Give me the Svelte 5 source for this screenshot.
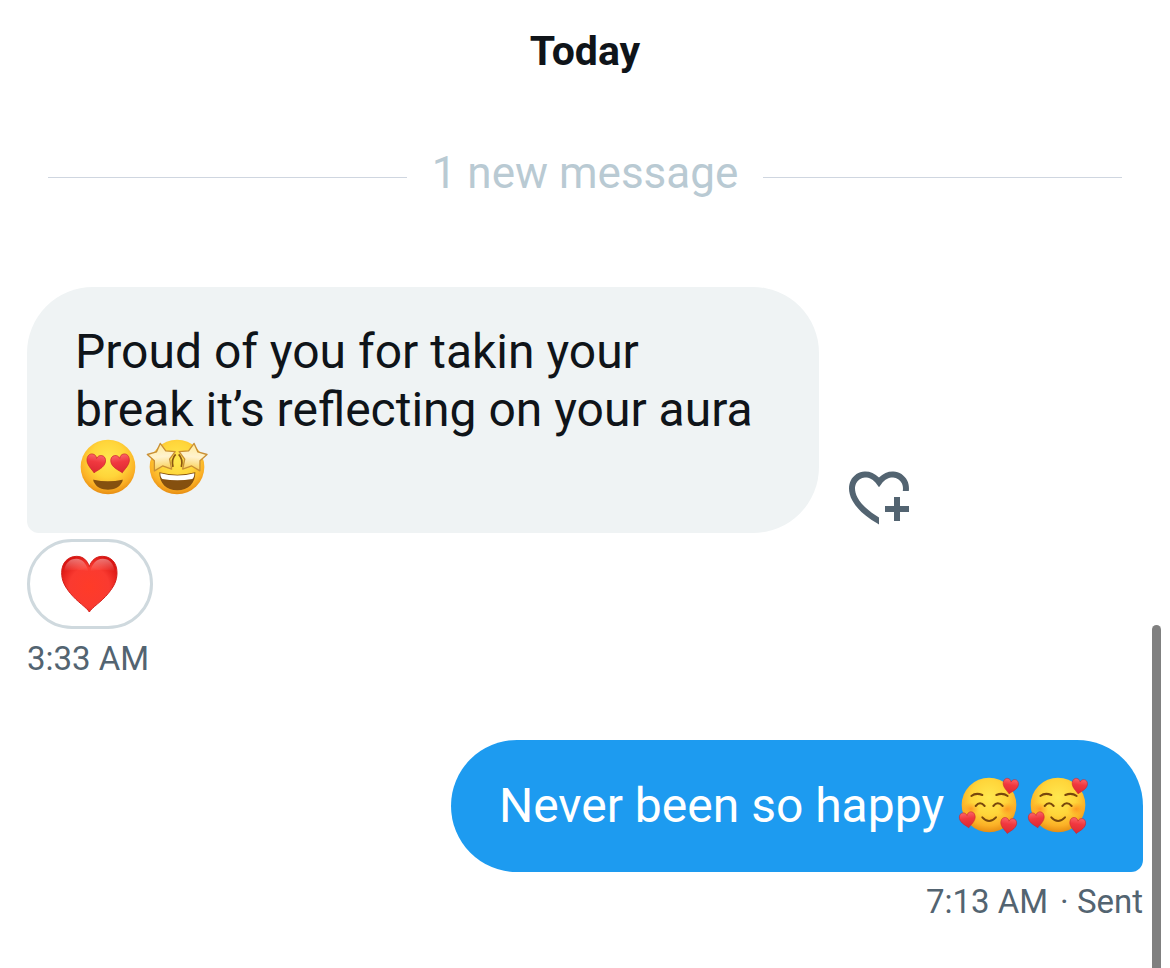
<script lang="ts">
	type EmojiName = 'heart-eyes' | 'star-struck' | 'smiling-hearts';

	type Message = {
		id: number;
		sent: boolean;
		lines: string[];
		emojis: EmojiName[];
		time: string;
		status?: string;
		liked: boolean;
	};

	const labels: Record<EmojiName, string> = {
		'heart-eyes': 'Smiling face with heart eyes',
		'star-struck': 'Star-struck',
		'smiling-hearts': 'Smiling face with hearts'
	};

	let messages: Message[] = $state([
		{
			id: 1,
			sent: false,
			lines: ['Proud of you for takin your', 'break it’s reflecting on your aura', ''],
			emojis: ['heart-eyes', 'star-struck'],
			time: '3:33 AM',
			liked: true
		},
		{
			id: 2,
			sent: true,
			lines: ['Never been so happy '],
			emojis: ['smiling-hearts', 'smiling-hearts'],
			time: '7:13 AM',
			status: 'Sent',
			liked: false
		}
	]);

	function toggleLike(message: Message) {
		message.liked = !message.liked;
	}
</script>

{#snippet smallHeart(x: number, y: number, scale: number, angle: number)}
	<path
		transform="translate({x} {y}) rotate({angle}) scale({scale})"
		d="M0 28C-6 20-28 8-28-10C-28-22-21-27-14-27C-7-27-2-23 0-16C2-23 7-27 14-27C21-27 28-22 28-10C28 8 6 20 0 28Z"
		fill="url(#heart)"
		stroke="#c9232b"
		stroke-width="2"
	/>
{/snippet}

{#snippet star(x: number, angle: number)}
	<path
		transform="translate({x} 66) rotate({angle})"
		d="M0-41L14-17L42-12L23 9L26 39L0 27L-26 39L-23 9L-42-12L-14-17Z"
		fill="url(#star)"
		stroke="#c98f35"
		stroke-width="4"
		stroke-linejoin="round"
	/>
{/snippet}

{#snippet emoji(name: EmojiName)}
	<svg class="emoji" viewBox="0 0 192 192" role="img" aria-label={labels[name]}>
		<circle cx="96" cy="96" r="82" fill="url(#face)" />
		{#if name === 'heart-eyes'}
			{@render smallHeart(59, 86, 1, 10)}
			{@render smallHeart(134, 86, 1, -10)}
			<path d="M53 134Q96 144 139 134C141 132 140 138 138 142C130 158 114 164 96 164C78 164 62 158 54 142C52 138 51 132 53 134Z" fill="#85500f" />
		{:else if name === 'star-struck'}
			<path d="M43 112Q97 126 151 112C151 145 130 166 97 166C64 166 43 145 43 112Z" fill="#85500f" />
			<path d="M46 115Q97 128 148 115Q148 128 142 132Q97 140 52 132Q46 128 46 115Z" fill="#fff" />
			<path d="M92 58Q78 72 84 96M101 58Q115 72 109 96" fill="none" stroke="#8a5512" stroke-width="5" />
			{@render star(50, -6)}
			{@render star(143, 6)}
		{:else}
			<ellipse cx="151" cy="108" rx="28" ry="20" fill="url(#blush)" />
			<ellipse cx="42" cy="108" rx="25" ry="20" fill="url(#blush)" />
			<g fill="none" stroke="#78470c" stroke-width="6" stroke-linecap="round">
				<path d="M43 69Q57 58 76 66M118 66Q137 58 152 69" />
				<path d="M56 99Q69 83 83 99M109 99Q122 83 137 99" />
				<path d="M76 133Q96 155 117 133" />
			</g>
			{@render smallHeart(160, 40, 0.82, 10)}
			{@render smallHeart(32, 141, 0.85, -8)}
			{@render smallHeart(154, 158, 0.85, 8)}
		{/if}
	</svg>
{/snippet}

<svg class="defs" width="0" height="0" aria-hidden="true">
	<defs>
		<radialGradient id="face" cx="0.5" cy="0.36" r="0.65">
			<stop offset="0" stop-color="#ffe84f" />
			<stop offset="0.5" stop-color="#ffd53a" />
			<stop offset="0.8" stop-color="#fbb026" />
			<stop offset="1" stop-color="#e58a10" />
		</radialGradient>
		<linearGradient id="heart" x1="0" y1="0" x2="0" y2="1">
			<stop offset="0" stop-color="#fb6468" />
			<stop offset="0.4" stop-color="#f0383f" />
			<stop offset="1" stop-color="#dc2832" />
		</linearGradient>
		<linearGradient id="star" x1="0" y1="0" x2="0" y2="1">
			<stop offset="0" stop-color="#ffeb9a" />
			<stop offset="0.5" stop-color="#fff3cf" />
			<stop offset="1" stop-color="#f9cf50" />
		</linearGradient>
		<radialGradient id="blush">
			<stop offset="0" stop-color="#ff8b1e" stop-opacity="0.75" />
			<stop offset="1" stop-color="#ff9d20" stop-opacity="0" />
		</radialGradient>
		<radialGradient id="reaction" cx="0.5" cy="0.55" r="0.6">
			<stop offset="0" stop-color="#ff3b28" />
			<stop offset="0.6" stop-color="#fa3a30" />
			<stop offset="1" stop-color="#d91412" />
		</radialGradient>
		<linearGradient id="shine" x1="0" y1="0" x2="0" y2="1">
			<stop offset="0" stop-color="#fff" stop-opacity="0.4" />
			<stop offset="1" stop-color="#fff" stop-opacity="0" />
		</linearGradient>
	</defs>
</svg>

<main class="thread">
	<h1 class="day">Today</h1>
	<div class="divider"><span>1 new message</span></div>

	{#each messages as message (message.id)}
		<article class="message" class:sent={message.sent}>
			<div class="row">
				<p class="bubble">
					{#each message.lines as line, i}{#if i > 0}<br />{/if}{line}{/each}<span class="emojis">
						{#each message.emojis as name}{@render emoji(name)}{/each}
					</span>
				</p>
				{#if !message.sent}
					<button class="react" aria-label="Add reaction" onclick={() => toggleLike(message)}>
						<svg viewBox="0 0 24 24" aria-hidden="true">
							<path d="M17 12v3h-2.998v2h3v3h2v-3h3v-2h-3.001v-3H17zm-5 6.839c-3.871-2.34-6.053-4.639-7.127-6.609-1.112-2.04-1.031-3.7-.479-4.82.561-1.13 1.667-1.84 2.91-1.91 1.222-.06 2.68.51 3.892 2.16l.806 1.09.805-1.09c1.211-1.65 2.668-2.22 3.89-2.16 1.242.07 2.347.78 2.908 1.91.334.677.49 1.554.321 2.59h2.011c.153-1.283-.039-2.469-.539-3.48-.887-1.79-2.647-2.91-4.601-3.01-1.65-.09-3.367.56-4.796 2.01-1.43-1.45-3.147-2.1-4.798-2.01-1.954.1-3.714 1.22-4.601 3.01-.896 1.81-.846 4.17.514 6.67 1.353 2.48 4.003 5.12 8.382 7.67l.502.299v-2.32z" />
						</svg>
					</button>
				{/if}
			</div>
			{#if message.liked}
				<button class="reaction" aria-label="Remove heart" onclick={() => toggleLike(message)}>
					<svg viewBox="0 0 192 192" aria-hidden="true">
						<path
							d="M94 180C86 166 58 150 37 124C20 103 11 86 11 62C11 31 31 13 56 13C75 13 88 25 94 44C100 25 114 13 133 13C158 13 177 31 177 62C177 86 168 103 151 124C130 150 102 166 94 180Z"
							fill="url(#reaction)"
							stroke="#d4201b"
							stroke-width="3"
						/>
						<path d="M19 58C20 33 36 20 55 20C74 20 86 36 91 58Q55 48 19 58ZM97 58C102 36 115 20 134 20C153 20 168 33 169 58Q134 48 97 58Z" fill="url(#shine)" />
					</svg>
				</button>
			{/if}
			<div class="meta">
				<time>{message.time}</time>
				{#if message.status}<span>· {message.status}</span>{/if}
			</div>
		</article>
	{/each}
</main>
<div class="scroll-thumb"></div>

<style>
	:global(body) {
		margin: 0;
		background: #fff;
	}
	.defs {
		position: absolute;
	}

	.thread {
		padding: 24px 27px 0;
		font-family: Roboto, 'Liberation Sans', sans-serif;
		color: #0f1419;
	}
	.day {
		margin: 0;
		font-size: 41px;
		line-height: 54px;
		font-weight: 700;
		text-align: center;
	}
	.divider {
		display: flex;
		align-items: center;
		gap: 25px;
		margin: 65px 21px 84px;
		font-size: 44px;
		line-height: 60px;
		color: #b9cad3;
	}
	.divider::before,
	.divider::after {
		content: '';
		flex: 1;
		height: 1px;
		margin-top: 8px;
		background: #cfd6e0;
	}

	.message {
		display: flex;
		flex-direction: column;
		align-items: flex-start;
		margin-bottom: 60px;
	}
	.message.sent {
		align-items: flex-end;
		margin-bottom: 0;
	}
	.row {
		display: flex;
		align-items: flex-end;
		gap: 24px;
		width: 100%;
	}
	.sent .row {
		justify-content: flex-end;
	}
	.bubble {
		box-sizing: border-box;
		width: 71%;
		margin: 0;
		padding: 36px 48px;
		border-radius: 66px 66px 66px 12px;
		background: #eff3f4;
		font-size: 48px;
		line-height: 58px;
	}
	.sent .bubble {
		width: auto;
		padding: 37px 48px;
		border-radius: 66px 66px 12px 66px;
		background: #1d9bf0;
		color: #fff;
	}
	.emojis {
		display: inline-flex;
		gap: 5px;
		height: 56px;
		padding: 0 5px 0 1px;
		align-items: center;
		vertical-align: top;
	}
	.emoji {
		flex: none;
		width: 64px;
		height: 64px;
	}

	.react {
		flex: none;
		display: flex;
		padding: 0;
		border: none;
		background: none;
		cursor: pointer;
	}
	.react svg {
		width: 72px;
		height: 72px;
		fill: #536471;
	}
	.reaction {
		box-sizing: border-box;
		display: flex;
		align-items: center;
		justify-content: center;
		width: 126px;
		height: 90px;
		margin-top: 6px;
		padding: 0;
		border: 3px solid #cfd9de;
		border-radius: 45px;
		background: #fff;
		cursor: pointer;
	}
	.reaction svg {
		width: 64px;
		height: 64px;
	}

	.meta {
		display: flex;
		gap: 12px;
		margin-top: 8px;
		font-size: 33px;
		line-height: 43px;
		color: #536471;
	}

	.scroll-thumb {
		position: fixed;
		top: 625px;
		right: 9px;
		bottom: -8px;
		width: 9px;
		border-radius: 5px;
		background: #808080;
	}
</style>
